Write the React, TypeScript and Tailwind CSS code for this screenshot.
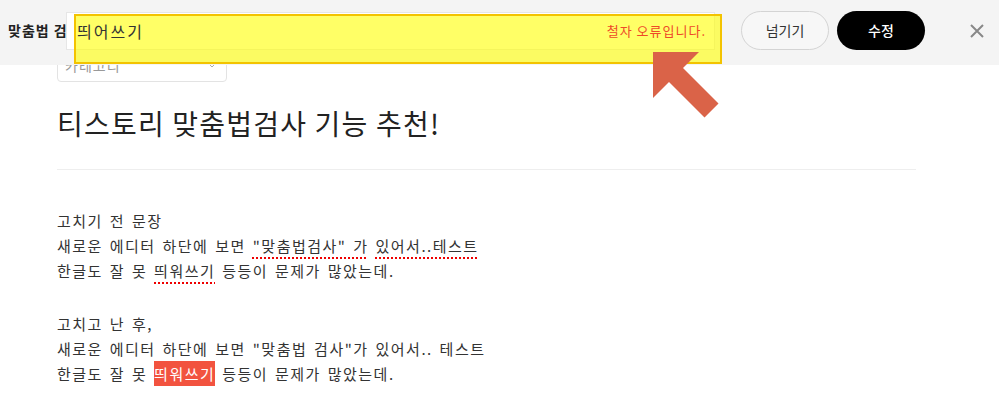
import React from "react";

// Spell-check toolbar overlaid on a Tistory editor page.
const FONT = { fontFamily: '"Noto Sans CJK KR", "Noto Sans", sans-serif' };

function Err({ children }: { children: React.ReactNode }) {
  return (
    <span className="underline decoration-dotted decoration-[#e00] decoration-2 underline-offset-[5px]">
      {children}
    </span>
  );
}

function Toolbar() {
  return (
    <div className="fixed inset-x-0 top-0 z-10 flex h-[65px] items-start bg-[#f4f4f4] pt-[11px]">
      <div className="flex h-[39px] w-[66px] shrink-0 items-center overflow-hidden whitespace-nowrap pl-2 text-[14px] font-bold tracking-[1px] text-[#222]">
        맞춤법 검사
      </div>
      <div className="mt-px flex h-[38px] w-[649px] shrink-0 items-center justify-between border border-[#e6e6e6] bg-white pl-[10px] pr-[8px]">
        <span className="relative z-[1] text-[16px] tracking-[2px] text-[#333]">띄어쓰기</span>
        <span className="relative z-[1] text-[13px] tracking-[1px] text-[#ee4a28]">철자 오류입니다.</span>
      </div>
      <button className="ml-[26px] flex h-[39px] w-[88px] items-center justify-center rounded-full border border-[#d4d4d4] bg-[#f7f7f7] text-[14px] text-[#333]">
        넘기기
      </button>
      <button className="ml-[8px] flex h-[39px] w-[88px] items-center justify-center rounded-full bg-black text-[14px] font-medium text-white">
        수정
      </button>
      <div className="ml-[45px] flex h-[39px] items-center">
        <svg width="14" height="14" viewBox="0 0 14 14">
          <path d="M1 1 L13 13 M13 1 L1 13" stroke="#888" strokeWidth="2" />
        </svg>
      </div>
      {/* highlight box around the flagged field, under the field's text */}
      <div className="absolute left-[74px] top-[14px] z-0 h-[50px] w-[648px] border-2 border-[#f3c300] bg-[#ffff00]/60" />
    </div>
  );
}

function Arrow() {
  return (
    <svg className="pointer-events-none fixed left-0 top-0 z-20" width="999" height="130">
      <polygon
        points="653,52 699,52 683,68 718.5,103.5 704.5,117.5 669,82 653,98"
        fill="#da6348"
      />
    </svg>
  );
}

export default function App() {
  return (
    <div className="relative min-h-[410px] bg-white" style={FONT}>
      <Toolbar />
      <Arrow />
      <div className="pl-[57px] pt-[48px]">
        <div className="flex h-[34px] w-[170px] items-center justify-between rounded-sm border border-[#e3e3e3] pl-[7px] pr-[10px] text-[14px] tracking-[1px] text-[#999]">
          <span>카테고리</span>
          <svg width="8" height="5" viewBox="0 0 8 5">
            <path d="M0.5 0.5 L4 4 L7.5 0.5" fill="none" stroke="#aaa" strokeWidth="1" />
          </svg>
        </div>
        <h1 className="mt-[21px] text-[28px] leading-[40px] tracking-[1.2px] text-[#222]">
          티스토리 맞춤법검사 기능 추천!
        </h1>
        <div className="mt-[26px] w-[859px] border-t border-[#eee]" />
        <div className="mt-[38px] text-[15px] leading-[25px] tracking-[1.5px] text-[#333] [word-spacing:2px]">
          <p>고치기 전 문장</p>
          <p>
            새로운 에디터 하단에 보면 <Err>"맞춤법검사" 가</Err> <Err>있어서..테스트</Err>
          </p>
          <p>
            한글도 잘 못 <Err>띄워쓰기</Err> 등등이 문제가 많았는데.
          </p>
          <p className="h-[28px]" />
          <p>고치고 난 후,</p>
          <p>새로운 에디터 하단에 보면 "맞춤법 검사"가 있어서.. 테스트</p>
          <p>
            한글도 잘 못 <span className="bg-[#f2533f] py-[2px] text-white">띄워쓰기</span> 등등이 문제가 많았는데.
          </p>
        </div>
      </div>
    </div>
  );
}
